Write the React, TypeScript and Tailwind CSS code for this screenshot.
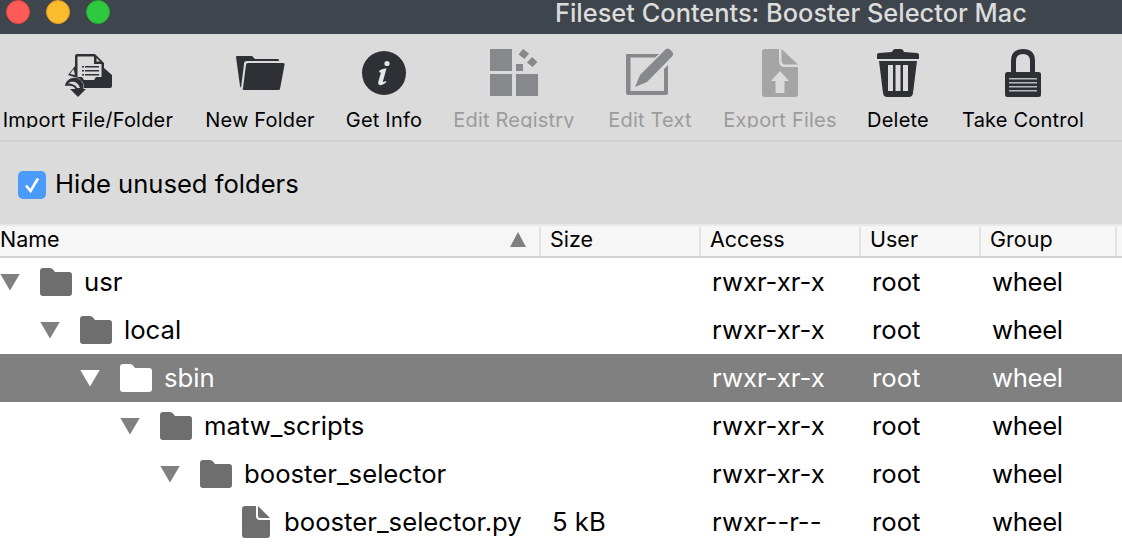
import type { ReactNode } from 'react';

const FONT = "font-['Inter','Liberation_Sans',sans-serif]";

function ImportIcon() {
  return (
    <svg width="50" height="50" viewBox="0 0 50 50" fill="#2e3035">
      <path d="M12 8 Q12 6 14 6 L32 6 L41 15 L41 20 L49 27 L49 38 Q49 40 47 40 L20 40 L14 30 L5 27 L12 18Z" />
      <path d="M14.5 8.5 L31 8.5 L31 16 L38.5 16 L38.5 29 L33 29 L31 32 L21 32 L19 29 L14.5 29Z" fill="#dbdbdb" />
      <path d="M33.5 10 L37 13.5 L33.5 13.5Z" fill="#dbdbdb" />
      <path d="M19 18h2v1.6h-2zM22 18h14v1.6H22zM19 22h2v1.6h-2zM22 22h14v1.6H22zM19 26h2v1.6h-2zM22 26h14v1.6H22z" />
      <path d="M10.5 21 L7 26 L12 27Z" fill="#dbdbdb" />
      <path
        d="M2 38 C3 29 16 26 20 36 L20.5 41 L23 41 L15 49 L7 41 L12 41 C12 38 7 37 2 38Z"
        stroke="#dbdbdb"
        strokeWidth="1"
        paintOrder="stroke"
      />
      <path d="M5 35.5 C8 32.5 15 33 17 40 L14 40 C13 37 9 35.5 5 35.5Z" fill="#dbdbdb" />
    </svg>
  );
}

function FolderOpenIcon() {
  return (
    <svg width="50" height="50" viewBox="0 0 50 50" fill="#2e3035">
      <path d="M1 9 Q1 8 2 8 L17 8 L20 11 L43 11 Q44 11 44 13 L12 13 Q9 13 9 16 L6 40 L5 38Z" />
      <path d="M13 15 L48 15 Q50 15 49.5 17 L45 41 Q45 42 43 42 L9 42 Q7 42 8 40 L11 17 Q11 15 13 15Z" />
    </svg>
  );
}

function InfoIcon() {
  return (
    <svg width="44" height="44" viewBox="0 0 44 44">
      <circle cx="22" cy="22" r="22" fill="#2e3035" />
      <circle cx="25" cy="12.5" r="2.6" fill="#e6e6e6" />
      <path d="M17 20 Q20 17 24.5 17.5 L21 30 Q20.5 32 23.5 30 L24.5 31 Q20.5 35 17.5 34 Q15.5 33.5 16.5 30 L19 21.5 L17.5 21.5Z" fill="#e6e6e6" />
    </svg>
  );
}

function RegistryIcon() {
  return (
    <svg width="48" height="48" viewBox="0 0 48 48" fill="#87888b">
      <rect x="0" y="0" width="22" height="22" />
      <rect x="0" y="25" width="22" height="22" />
      <rect x="26" y="25" width="22" height="22" />
      <rect x="26" y="15" width="7" height="7" />
      <path d="M33 0 L39 4.5 L34.5 10 L28.5 5.5Z" />
      <path d="M42 8 L47.5 13 L42.5 18 L37 13.5Z" />
    </svg>
  );
}

function EditTextIcon() {
  return (
    <svg width="50" height="50" viewBox="0 0 50 50" fill="#87888b">
      <path d="M2 6 L34 6 L30 9.5 L5.5 9.5 L5.5 43 L39 43 L39 21 L43 17 L43 45 Q43 47 41 47 L3 47 Q1 47 1 45 L1 7 Q1 6 2 6Z" />
      <path d="M41 1 Q43 0 45 1.5 L47.5 4 Q49 6 47.5 8 L22 34 L10 39 L15 27Z" />
    </svg>
  );
}

function ExportIcon() {
  return (
    <svg width="36" height="48" viewBox="0 0 36 48" fill="#a5a5a5">
      <path d="M3 0 L17 0 L17 12 Q17 18 23 18 L36 18 L36 45 Q36 48 33 48 L3 48 Q0 48 0 45 L0 3 Q0 0 3 0Z" />
      <path d="M19.5 0 L36 15.5 L24 15.5 Q19.5 15.5 19.5 12Z" />
      <path d="M18 22 L27 32 L22.5 32 L22.5 44 L13.5 44 L13.5 32 L9 32Z" fill="#dbdbdb" />
    </svg>
  );
}

function TrashIcon() {
  return (
    <svg width="42" height="48" viewBox="0 0 42 48" fill="#2e3035">
      <path d="M15 3 Q16 0 18 0 L24 0 Q26 0 27 3 L40 4 Q42 4 42 6 L42 10 L0 10 L0 6 Q0 4 2 4Z" />
      <path d="M2 12 L40 12 L36 44 Q35.5 48 32 48 L10 48 Q6.5 48 6 44Z" />
      <path d="M11 16h5v26h-5zM18.5 16h5v26h-5zM26 16h5v26h-5z" fill="#dbdbdb" />
    </svg>
  );
}

function LockIcon() {
  return (
    <svg width="36" height="48" viewBox="0 0 36 48" fill="#2e3035">
      <path d="M6 23 L6 12 Q6 0 18 0 Q30 0 30 12 L30 23 L25 23 L25 12 Q25 5 18 5 Q11 5 11 12 L11 23Z" />
      <rect x="0" y="23" width="36" height="25" rx="2.5" />
      <path d="M4 29h28v1.5H4zM4 33h28v1.5H4zM4 37h28v1.5H4zM4 41h28v1.5H4z" fill="#b9babb" />
    </svg>
  );
}

const tools: { label: string; width: string; disabled?: boolean; icon: ReactNode }[] = [
  { label: 'Import File/Folder', width: 'w-[176px]', icon: <ImportIcon /> },
  { label: 'New Folder', width: 'w-[168px]', icon: <FolderOpenIcon /> },
  { label: 'Get Info', width: 'w-[80px]', icon: <InfoIcon /> },
  { label: 'Edit Registry', width: 'w-[180px]', disabled: true, icon: <RegistryIcon /> },
  { label: 'Edit Text', width: 'w-[92px]', disabled: true, icon: <EditTextIcon /> },
  { label: 'Export Files', width: 'w-[168px]', disabled: true, icon: <ExportIcon /> },
  { label: 'Delete', width: 'w-[68px]', icon: <TrashIcon /> },
  { label: 'Take Control', width: 'w-[182px]', icon: <LockIcon /> },
];

function ToolButton({ label, width, disabled, icon }: (typeof tools)[number]) {
  return (
    <div className={`${width} flex flex-col items-center`}>
      <div className="h-[50px] flex items-center justify-center">{icon}</div>
      <div
        className={`mt-[10px] h-[20px] overflow-hidden whitespace-nowrap text-[20px] leading-[24px] tracking-[0.2px] ${
          disabled ? 'text-[#9b9b9b]' : 'text-black'
        }`}
      >
        {label}
      </div>
    </div>
  );
}

function Folder({ selected }: { selected?: boolean }) {
  return (
    <svg width="32" height="28" viewBox="0 0 32 28" fill={selected ? '#ffffff' : '#6e6e6e'}>
      <path d="M0 3 Q0 0 3 0 L10 0 Q12 0 13 1.5 L15 4 L29 4 Q32 4 32 7 L32 25 Q32 28 29 28 L3 28 Q0 28 0 25Z" />
    </svg>
  );
}

function FileIcon() {
  return (
    <svg width="28" height="32" viewBox="0 0 28 32" fill="#6e6e6e">
      <path d="M3 0 L14 0 L14 10 Q14 14 18 14 L28 14 L28 29 Q28 32 25 32 L3 32 Q0 32 0 29 L0 3 Q0 0 3 0Z" />
      <path d="M16 0 L28 12 L18 12 Q16 12 16 10Z" />
    </svg>
  );
}

const rows = [
  { name: 'usr', depth: 0, access: 'rwxr-xr-x' },
  { name: 'local', depth: 1, access: 'rwxr-xr-x' },
  { name: 'sbin', depth: 2, access: 'rwxr-xr-x', selected: true },
  { name: 'matw_scripts', depth: 3, access: 'rwxr-xr-x' },
  { name: 'booster_selector', depth: 4, access: 'rwxr-xr-x' },
  { name: 'booster_selector.py', depth: 5, access: 'rwxr--r--', size: '5 kB', file: true },
];

const indents = ['pl-0', 'pl-[40px]', 'pl-[80px]', 'pl-[120px]', 'pl-[160px]', 'pl-[200px]'];

function Row({ row }: { row: (typeof rows)[number] }) {
  const { name, depth, access, selected, size, file } = row;
  return (
    <div
      className={`h-[48px] flex items-center text-[25.7px] leading-[34px] ${
        selected ? 'bg-[#808080] text-white' : 'bg-white text-black'
      }`}
    >
      <div className={`w-[541px] flex items-center ${indents[depth]}`}>
        {file ? (
          <div className="ml-[42px] mr-[14px] flex">
            <FileIcon />
          </div>
        ) : (
          <>
            <div
              className={`w-[20px] h-[17px] [clip-path:polygon(0_0,100%_0,50%_100%)] ${
                selected ? 'bg-white' : 'bg-[#808080]'
              }`}
            />
            <div className="ml-[20px] mr-[12px] flex">
              <Folder selected={selected} />
            </div>
          </>
        )}
        <span className="whitespace-nowrap">{name}</span>
      </div>
      <div className="w-[160px] pl-[11px]">{size}</div>
      <div className="w-[160px] pl-[11px]">{access}</div>
      <div className="w-[120px] pl-[11px]">root</div>
      <div className="pl-[11px] tracking-[-0.35px]">wheel</div>
    </div>
  );
}

function HeaderCell({ width, children }: { width: string; children: ReactNode }) {
  return (
    <div className={`${width} h-full flex items-center pl-[9px] pb-[3px] border-r-2 border-[#e2e2e2]`}>{children}</div>
  );
}

export default function App() {
  return (
    <div className={`w-[1122px] h-[546px] overflow-hidden bg-white ${FONT}`}>
      <div className="relative h-[34px] bg-[#3f454c]">
        <div className="absolute left-[6px] top-0 flex gap-[16px]">
          <div className="w-[24px] h-[24px] rounded-full bg-[#fc5b57] border border-[#e3483f]" />
          <div className="w-[24px] h-[24px] rounded-full bg-[#fdbb2e] border border-[#e09e1e]" />
          <div className="w-[24px] h-[24px] rounded-full bg-[#2fc941] border border-[#27aa35]" />
        </div>
        <div className="pl-[555px] h-[34px] leading-[26px] text-[25.4px] font-medium whitespace-nowrap text-[#dcdcdc]">
          Fileset Contents: Booster Selector Mac
        </div>
      </div>

      <div className="h-[108px] pt-[14px] bg-[#dbdbdb] border-b-2 border-[#d0d0d0] flex">
        {tools.map(t => (
          <ToolButton key={t.label} {...t} />
        ))}
      </div>

      <div className="h-[82px] bg-[#dbdbdb] flex items-center gap-[9px] pl-[18px] pt-[3px] text-[25.6px] text-black">
        <div className="w-[28px] h-[28px] rounded-[5px] bg-[#4a9bfb] flex items-center justify-center">
          <svg width="20" height="20" viewBox="0 0 20 20" fill="none">
            <path d="M4 10.5 L8.5 16 L16 3.5" stroke="#fff" strokeWidth="2.6" />
          </svg>
        </div>
        <span>Hide unused folders</span>
      </div>

      <div className="h-[34px] bg-[#f6f6f6] border-t-2 border-[#e8e8e8] border-b-2 border-b-[#d4d4d4] flex text-[21.5px] text-black">
        <div className="w-[541px] h-full flex items-center justify-between pr-[13px] pb-[3px] border-r-2 border-[#e2e2e2]">
          <span>Name</span>
          <div className="w-[16px] h-[15px] bg-[#808080] [clip-path:polygon(50%_0,100%_100%,0_100%)]" />
        </div>
        <HeaderCell width="w-[160px]">Size</HeaderCell>
        <HeaderCell width="w-[160px]">Access</HeaderCell>
        <HeaderCell width="w-[120px]">User</HeaderCell>
        <HeaderCell width="w-[136px]">Group</HeaderCell>
      </div>

      {rows.map(r => (
        <Row key={r.name} row={r} />
      ))}
    </div>
  );
}
